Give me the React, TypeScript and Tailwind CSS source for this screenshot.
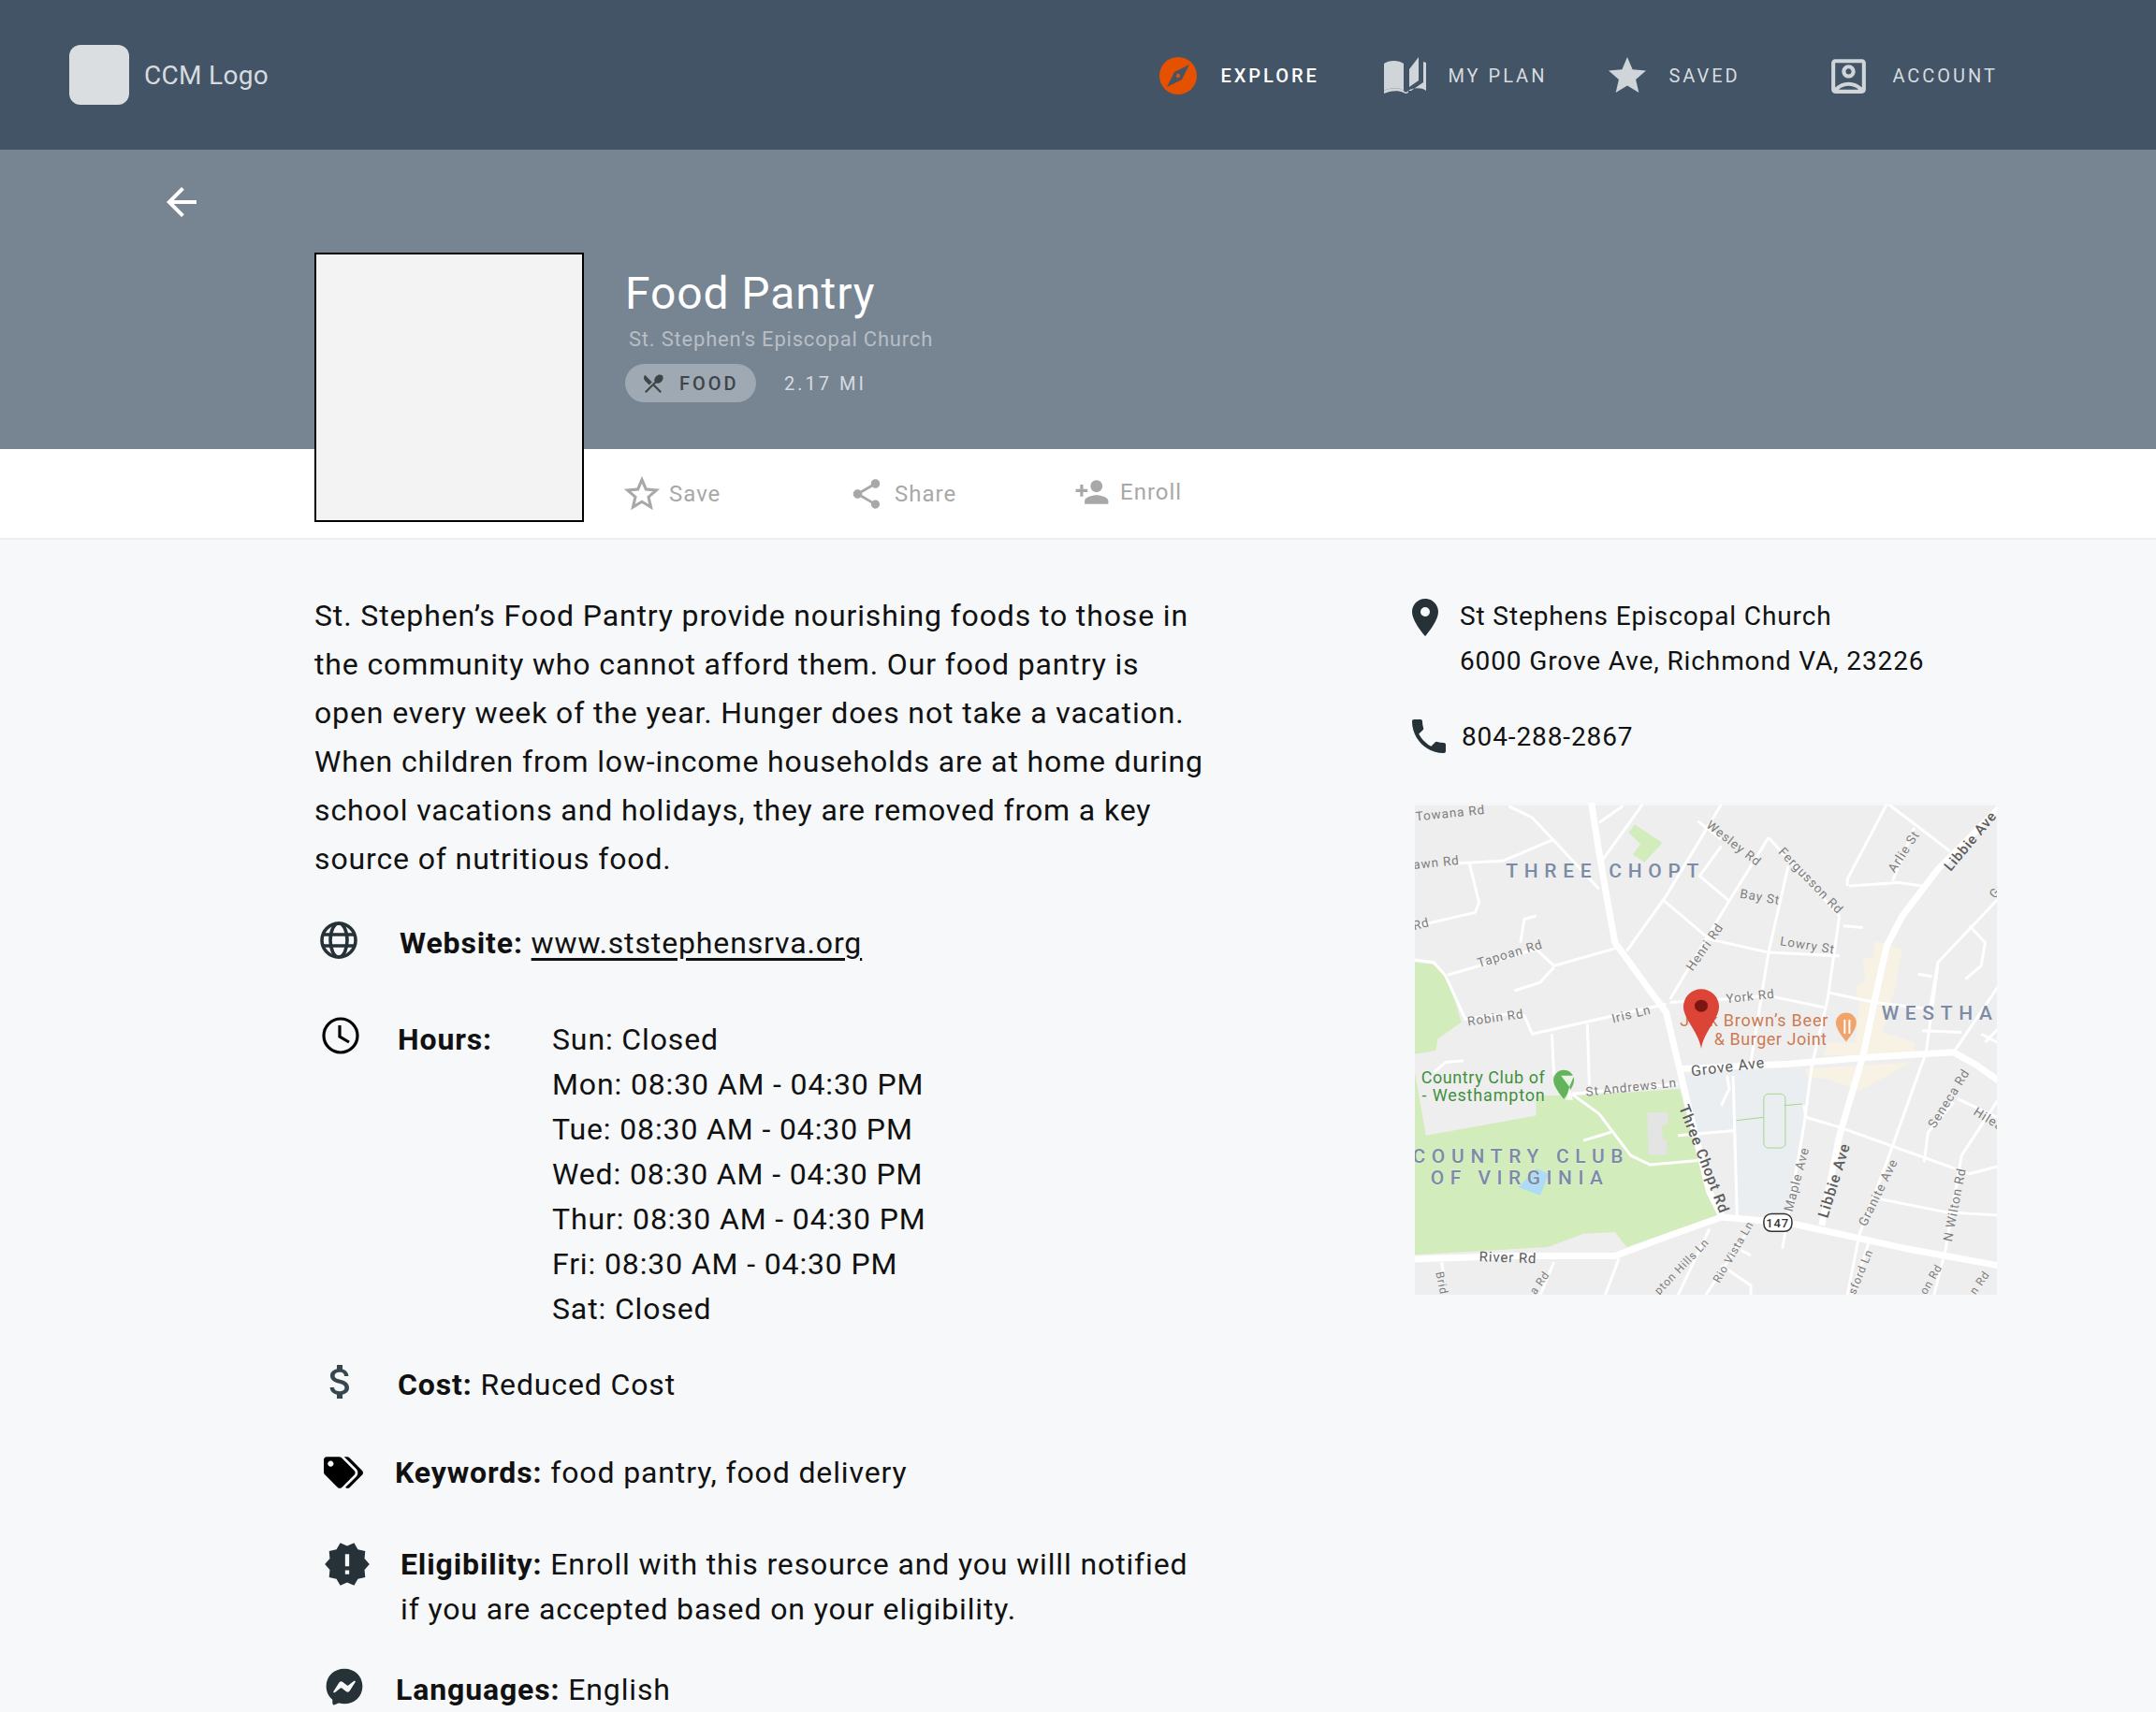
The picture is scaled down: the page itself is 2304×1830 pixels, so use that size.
import { ReactNode } from 'react';
import {
  MdAttachMoney,
  MdLocationOn,
  MdNewReleases,
  MdOutlineAccountBox,
  MdPersonAdd,
  MdPhone,
  MdRestaurantMenu,
  MdShare,
  MdStar,
  MdStarBorder,
} from 'react-icons/md';
import { FaFacebookMessenger, FaTags } from 'react-icons/fa';

// map drawing: coordinates were read off a zoomed crop, so convert them here
const mx = (x: number) => (x - 52) / 2.376;
const my = (y: number) => (y - 50) / 2.8;
const pts = (list: number[]) => {
  const out: string[] = [];
  for (let i = 0; i < list.length; i += 2) out.push(`${mx(list[i])},${my(list[i + 1])}`);
  return out.join(' ');
};

const bigRoads = [
  [500, 50, 520, 200, 540, 340, 560, 470, 640, 600, 690, 680, 720, 830, 750, 980, 800, 1220, 830, 1290],
  [40, 1422, 300, 1412, 560, 1412, 700, 1350, 830, 1295, 1000, 1312, 1300, 1390, 1540, 1442],
  [720, 850, 1000, 835, 1200, 815, 1420, 800, 1480, 840, 1540, 890],
  [1540, 60, 1380, 250, 1290, 390, 1250, 480, 1220, 640, 1190, 810, 1130, 1050, 1085, 1320],
];

const smallRoads = [
  [290, 60, 350, 95, 410, 170, 520, 310],
  [160, 232, 275, 225, 405, 160],
  [190, 230, 215, 350, 205, 380, 40, 425],
  [520, 110, 580, 60],
  [530, 220, 630, 55],
  [590, 495, 690, 330, 830, 55],
  [830, 180, 775, 270, 850, 345],
  [770, 105, 830, 160],
  [950, 155, 850, 345, 700, 640],
  [950, 155, 1130, 390],
  [1000, 240, 950, 500, 905, 830],
  [680, 340, 800, 460, 950, 500, 1130, 510],
  [1130, 390, 1100, 640, 1060, 840, 1040, 1020, 985, 1390],
  [1150, 300, 1150, 280, 1250, 55],
  [1155, 300, 1280, 290, 1340, 300],
  [1255, 55, 1410, 195],
  [1320, 125, 1265, 285],
  [1100, 620, 1220, 650, 1360, 670],
  [700, 650, 840, 640, 950, 630, 1090, 665],
  [690, 655, 350, 745, 330, 690, 290, 685, 180, 700, 130, 570, 100, 530, 40, 520],
  [135, 568, 215, 540, 360, 490, 405, 540, 560, 488],
  [405, 545, 370, 590, 305, 615],
  [320, 470, 330, 400, 360, 390],
  [400, 745, 405, 870],
  [490, 715, 495, 900],
  [450, 925, 720, 895],
  [450, 925, 520, 985, 600, 1110, 650, 1138, 770, 1125],
  [100, 860, 130, 830, 175, 825],
  [550, 1040, 480, 1065],
  [720, 1050, 865, 1035],
  [860, 870, 870, 1290],
  [845, 870, 850, 910, 830, 960],
  [1040, 960, 1045, 995, 1130, 1025, 1460, 1165, 1540, 1140],
  [1380, 540, 1350, 800, 1250, 1130, 1180, 1350, 1150, 1530],
  [1540, 330, 1380, 530, 1360, 670],
  [1420, 800, 1540, 590],
  [1430, 940, 1540, 1000],
  [1440, 1110, 1540, 930],
  [1440, 1110, 1400, 1390, 1370, 1530],
  [1230, 1240, 1400, 1280, 1540, 1290],
  [1345, 1130, 1355, 1040, 1420, 950],
  [1140, 420, 1190, 425],
  [1460, 420, 1500, 470, 1490, 540, 1450, 580],
  [1330, 565, 1365, 572],
  [800, 1330, 720, 1530],
  [890, 1350, 790, 1530],
  [880, 1395, 905, 1410],
  [830, 1440, 905, 1500, 905, 1530],
  [570, 1420, 535, 1530],
  [405, 1430, 370, 1530],
  [120, 1430, 125, 1470],
  [1205, 1370, 1160, 1530],
  [1340, 735, 1440, 740],
  [1540, 720, 1500, 770],
  [1530, 770, 1490, 745],
];

type Label = { t: string; x: number; y: number; r?: number; s?: number; c?: string; w?: number; b?: number };

const gray = '#7d7d7d';
const dark = '#5c5c5c';
const area = '#7c8ba6';

const labels: Label[] = [
  { t: 'Towana Rd', x: 55, y: 105, r: -6 },
  { t: 'Lawn Rd', x: 30, y: 252, r: -6 },
  { t: 'Rd', x: 50, y: 433, r: -14 },
  { t: 'Tapoan Rd', x: 215, y: 545, r: -17 },
  { t: 'Robin Rd', x: 187, y: 720, r: -8 },
  { t: 'Iris Ln', x: 555, y: 712, r: -14 },
  { t: 'York Rd', x: 843, y: 652, r: -6 },
  { t: 'Henri Rd', x: 757, y: 558, r: -55 },
  { t: 'Wesley Rd', x: 790, y: 122, r: 38 },
  { t: 'Fergusson Rd', x: 973, y: 200, r: 46 },
  { t: 'Bay St', x: 876, y: 335, r: 10 },
  { t: 'Lowry St', x: 978, y: 478, r: 9 },
  { t: 'Arlie St', x: 1270, y: 262, r: -57 },
  { t: 'Libbie Ave', x: 1412, y: 258, r: -50, s: 15, c: dark, b: 500 },
  { t: 'Gr', x: 1525, y: 340, r: -50 },
  { t: 'Seneca Rd', x: 1372, y: 1030, r: -58 },
  { t: 'Hilea', x: 1468, y: 985, r: 32 },
  { t: 'Maple Ave', x: 1010, y: 1280, r: -75 },
  { t: 'Libbie Ave', x: 1100, y: 1300, r: -73, s: 16, c: dark, b: 500 },
  { t: 'Granite Ave', x: 1197, y: 1325, r: -64 },
  { t: 'N Wilton Rd', x: 1415, y: 1370, r: -79 },
  { t: 'Three Chopt Rd', x: 722, y: 965, r: 69, s: 16, c: dark, b: 500 },
  { t: 'Grove Ave', x: 755, y: 872, r: -7, s: 16, c: dark },
  { t: 'St Andrews Ln', x: 487, y: 932, r: -6 },
  { t: 'River Rd', x: 215, y: 1428, r: 2, s: 15, c: dark },
  { t: 'Rio Vista Ln', x: 825, y: 1495, r: -60, s: 12 },
  { t: 'pton Hills Ln', x: 672, y: 1530, r: -46, s: 12 },
  { t: 'a Rd', x: 358, y: 1530, r: -55, s: 12 },
  { t: 'Brid', x: 105, y: 1462, r: 78, s: 12 },
  { t: 'sford Ln', x: 1170, y: 1530, r: -68, s: 12 },
  { t: 'on Rd', x: 1350, y: 1530, r: -60, s: 12 },
  { t: 'n Rd', x: 1475, y: 1530, r: -55, s: 12 },
  { t: 'THREE CHOPT', x: 283, y: 275, s: 21, c: area, w: 207, b: 500 },
  { t: 'WESTHA', x: 1237, y: 703, s: 21, c: area, w: 119, b: 500 },
  { t: 'COUNTRY CLUB', x: 46, y: 1133, s: 21, c: area, w: 226, b: 500 },
  { t: 'OF VIRGINIA', x: 92, y: 1197, s: 21, c: area, w: 185, b: 500 },
  { t: 'Jack Brown\u2019s Beer', x: 725, y: 723, s: 18, c: '#cc7a52', w: 159 },
  { t: '& Burger Joint', x: 812, y: 778, s: 18, c: '#cc7a52', w: 121 },
  { t: 'Country Club of', x: 68, y: 893, s: 18, c: '#3f8f3f', w: 133 },
  { t: '- Westhampton', x: 70, y: 948, s: 18, c: '#3f8f3f', w: 132 },
];

function MapPicture() {
  return (
    <svg viewBox="0 0 622 528" width={622} height={526} preserveAspectRatio="none" className="block">
      <rect width={622} height={528} fill="#eeeeee" />
      <rect width={622} height={3} fill="#f6f6f6" />
      <polygon
        fill="#d2ecbc"
        points={pts([52, 530, 95, 535, 135, 570, 170, 710, 110, 760, 105, 795, 52, 805])}
      />
      <polygon
        fill="#d2ecbc"
        points={pts([
          52, 860, 80, 1050, 360, 990, 360, 930, 470, 930, 540, 1010, 600, 1110, 650, 1140, 770, 915, 730, 900, 770, 1125,
          820, 1290, 700, 1340, 590, 1385, 560, 1340, 480, 1345, 390, 1385, 52, 1408,
        ])}
      />
      <polygon fill="#d2ecbc" points={pts([470, 930, 725, 910, 770, 1125, 650, 1140, 600, 1110])} />
      <polygon fill="#e4e4e4" points={pts([642, 980, 695, 980, 695, 1015, 680, 1020, 680, 1060, 692, 1065, 692, 1108, 645, 1108])} />
      <polygon fill="#d2ecbc" points={pts([610, 115, 680, 170, 635, 230, 605, 205, 625, 175, 595, 140])} />
      <polygon fill="#aedbf5" points={pts([315, 1205, 360, 1150, 392, 1165, 370, 1230])} />
      <polygon
        fill="#ebeef1"
        points={pts([850, 855, 1060, 845, 1040, 1020, 1000, 1280, 870, 1285, 860, 1030, 770, 1040, 735, 870])}
      />
      <polygon
        fill="#f8f2e4"
        points={pts([
          1220, 465, 1290, 490, 1270, 610, 1240, 740, 1320, 770, 1320, 800, 1090, 810, 1100, 770, 1170, 770, 1180, 650, 1170,
          600, 1195, 590, 1190, 520, 1215, 515,
        ])}
      />
      <polygon fill="#f8f2e4" points={pts([1040, 850, 1310, 830, 1230, 885, 1180, 915, 1100, 880, 1050, 875])} />
      {smallRoads.map((r, i) => (
        <polyline key={i} points={pts(r)} fill="none" stroke="#ffffff" strokeWidth={3} strokeLinejoin="round" />
      ))}
      {bigRoads.map((r, i) => (
        <polyline key={i} points={pts(r)} fill="none" stroke="#ffffff" strokeWidth={7} strokeLinejoin="round" />
      ))}
      <polyline points={pts([868, 1005, 938, 995])} fill="none" stroke="#a5d48f" strokeWidth={1} />
      <polyline points={pts([990, 960, 1035, 955])} fill="none" stroke="#a5d48f" strokeWidth={1} />
      <rect x={mx(938)} y={my(925)} width={23} height={58} rx={5} fill="none" stroke="#a5d48f" strokeWidth={1} />
      {labels.map((l) => (
        <text
          key={l.t + l.x}
          x={mx(l.x)}
          y={my(l.y)}
          transform={l.r ? `rotate(${l.r} ${mx(l.x)} ${my(l.y)})` : undefined}
          fontFamily="Roboto, sans-serif"
          fontSize={l.s ?? 13.5}
          fontWeight={l.b ?? 400}
          fill={l.c ?? gray}
          stroke="#f4f4f4"
          strokeOpacity={0.6}
          strokeWidth={1}
          paintOrder="stroke"
          textLength={l.w}
          lengthAdjust={l.w ? 'spacing' : undefined}
        >
          {l.t}
        </text>
      ))}
      {/* highway shield */}
      <rect x={mx(938)} y={my(1285)} width={30} height={19} rx={8} fill="#ffffff" stroke="#333333" strokeWidth={1.5} />
      <text x={mx(973)} y={my(1326)} textAnchor="middle" fontFamily="Roboto, sans-serif" fontSize={13} fontWeight={500} fill="#333333">
        147
      </text>
      {/* restaurant poi */}
      <path d={`M${mx(1147)} ${my(768)} q-11 -13 -11 -20 a11 11 0 1 1 22 0 q0 7 -11 20z`} fill="#f0a36b" />
      <rect x={mx(1141)} y={my(702)} width={2} height={15} fill="#ffffff" />
      <rect x={mx(1153)} y={my(702)} width={2} height={15} fill="#ffffff" />
      {/* golf poi */}
      <path d={`M${mx(430)} ${my(940)} q-11 -13 -11 -20 a11 11 0 1 1 22 0 q0 7 -11 20z`} fill="#63b35a" />
      <path d={`M${mx(423)} ${my(870)} h14 l-5 12 l4 14 h-8 l4 -14 z`} fill="#ffffff" opacity={0.85} />
      {/* selected marker */}
      <path d="M306 264 C303 245 287 232 287 219 a19 19 0 1 1 38 0 C325 232 309 245 306 264z" fill="#db4437" />
      <ellipse cx={306} cy={218} rx={7} ry={6.5} fill="#7b1611" />
    </svg>
  );
}

function Compass() {
  return (
    <svg viewBox="0 0 40 40" width={40} height={40} className="shrink-0">
      <circle cx={20} cy={20} r={20} fill="#e65100" />
      <path d="M32 8 L24 24 L8 32 L16 16 Z" fill="#425466" />
      <circle cx={20} cy={20} r={2.2} fill="#e65100" />
    </svg>
  );
}

function Book() {
  return (
    <svg viewBox="0 0 45 40" width={45} height={40} className="shrink-0">
      <path
        d="M0 7 C5 3 16 3 21 7 V36 C16 32 6 33 0 36 Z M26 36 C30 33 40 32 45 36 V6 L42 5 V27 L29 36 Z M27 13 L37 0 V25 L27 32 Z"
        fill="#d0d5d9"
      />
      <path d="M21 36 Q23.5 39 26 36 L26 38 Q23.5 40 21 38Z M0 36 C6 33 16 32 21 36 V38 C15 35 6 36 0 39Z" fill="#d0d5d9" />
    </svg>
  );
}

function Globe() {
  return (
    <svg viewBox="0 0 40 40" width={40} height={40} fill="none" stroke="#263238" strokeWidth={3.6} className="shrink-0">
      <circle cx={20} cy={20} r={18} />
      <ellipse cx={20} cy={20} rx={9} ry={18} />
      <path d="M2 14 H38 M2 26 H38" />
    </svg>
  );
}

function Clock() {
  return (
    <svg viewBox="0 0 40 40" width={40} height={40} fill="none" stroke="#000000" strokeWidth={3.2} className="shrink-0">
      <circle cx={20} cy={20} r={18} />
      <path d="M19 9 V21 L29 27" />
    </svg>
  );
}

function NavItem({ icon, label, active, className }: { icon: ReactNode; label: string; active?: boolean; className: string }) {
  return (
    <div className={`flex items-center ${className}`}>
      <div className="flex h-10 items-center justify-center">{icon}</div>
      <span className={`text-[20px] tracking-[3px] ${active ? 'font-medium text-white' : 'text-[#d7dbdf]'}`}>{label}</span>
    </div>
  );
}

function Action({ icon, label, className }: { icon: ReactNode; label: string; className: string }) {
  return (
    <div className={`flex items-center text-[#a8a8a8] ${className}`}>
      {icon}
      <span className="text-[24px] tracking-[1px]">{label}</span>
    </div>
  );
}

function Row({ icon, children, className }: { icon: ReactNode; children: ReactNode; className: string }) {
  return (
    <div className={`flex items-start ${className}`}>
      {icon}
      {children}
    </div>
  );
}

const hours = [
  'Sun: Closed',
  'Mon: 08:30 AM - 04:30 PM',
  'Tue: 08:30 AM - 04:30 PM',
  'Wed: 08:30 AM - 04:30 PM',
  'Thur: 08:30 AM - 04:30 PM',
  'Fri: 08:30 AM - 04:30 PM',
  'Sat: Closed',
];

export default function App() {
  return (
    <div className="h-[1830px] overflow-hidden bg-[#f6f8fa] font-['Roboto',sans-serif] text-[#111111]">
      <header className="flex h-[160px] items-center bg-[#425466] pl-[74px]">
        <div className="h-16 w-16 rounded-xl bg-[#dadee1]" />
        <span className="ml-4 pt-[2px] text-[28px] tracking-[0.3px] text-[#d7dbdf]">CCM Logo</span>
        <nav className="ml-auto mr-[169px] flex items-center pt-[2px]">
          <NavItem icon={<Compass />} label="EXPLORE" active className="w-[240px] gap-[25px]" />
          <NavItem icon={<Book />} label="MY PLAN" className="w-[236px] gap-[23px]" />
          <NavItem icon={<MdStar size={48} color="#d0d5d9" />} label="SAVED" className="w-[236px] gap-[20px]" />
          <NavItem icon={<MdOutlineAccountBox size={49} color="#d0d5d9" />} label="ACCOUNT" className="gap-[22px]" />
        </nav>
      </header>

      <section className="relative h-[320px] bg-[#778592]">
        <svg viewBox="0 0 24 24" width={48} height={48} fill="#ffffff" className="absolute left-[170px] top-[32px]">
          <path d="M20 11H7.83l5.59-5.59L12 4l-8 8 8 8 1.41-1.41L7.83 13H20v-2z" />
        </svg>
        <div className="absolute left-[668px] top-[118px]">
          <h1 className="text-[48px] leading-[72px] tracking-[0.9px] text-white">Food Pantry</h1>
          <p className="ml-[4px] -mt-[2px] text-[22px] leading-[30px] tracking-[0.8px] text-[#b7bec6]">St. Stephen’s Episcopal Church</p>
          <div className="mt-[11px] flex items-center">
            <div className="flex h-[41px] w-[140px] items-center rounded-full bg-[#9ea9b3] pl-[17px]">
              <MdRestaurantMenu size={26} color="#3f4448" />
              <span className="ml-[15px] text-[20px] font-medium tracking-[3px] text-[#3f4448]">FOOD</span>
            </div>
            <span className="ml-[30px] text-[20px] tracking-[3px] text-[#d7dbdf]">2.17 MI</span>
          </div>
        </div>
      </section>

      <section className="relative flex h-[97px] items-center border-b-2 border-[#eceef0] bg-white pl-[663px] pt-[1px]">
        <div className="absolute left-[336px] top-[-210px] h-[288px] w-[288px] border-2 border-black bg-[#f3f3f3]" />
        <Action icon={<MdStarBorder size={46} />} label="Save" className="w-[244px] gap-[6px]" />
        <Action icon={<MdShare size={38} />} label="Share" className="w-[241px] gap-[11px]" />
        <Action icon={<MdPersonAdd size={38} />} label="Enroll" className="-translate-y-[2px] gap-[11px]" />
      </section>

      <main className="flex pl-[336px] pt-[55px]">
        <div className="w-[970px] text-[32px] leading-[48px] tracking-[0.87px]">
          <p className="leading-[52px]">
            St. Stephen’s Food Pantry provide nourishing foods to those in
            <br />
            the community who cannot afford them. Our food pantry is
            <br />
            open every week of the year. Hunger does not take a vacation.
            <br />
            When children from low-income households are at home during
            <br />
            school vacations and holidays, they are removed from a key
            <br />
            source of nutritious food.
          </p>

          <Row icon={<div className="ml-[6px] mr-[45px] pt-[1px]"><Globe /></div>} className="mt-[40px]">
            <span>
              <b className="font-bold">Website:</b> <span className="underline underline-offset-[5px]">www.ststephensrva.org</span>
            </span>
          </Row>

          <Row icon={<div className="ml-[8px] mr-[41px]"><Clock /></div>} className="mt-[55px]">
            <b className="w-[165px] font-bold">Hours:</b>
            <div>
              {hours.map((h) => (
                <div key={h}>{h}</div>
              ))}
            </div>
          </Row>

          <Row icon={<div className="mr-[28px] flex w-[61px] justify-start"><MdAttachMoney size={48} color="#37474f" className="-mt-[3px] ml-[4px]" /></div>} className="mt-[33px]">
            <span>
              <b className="font-bold">Cost:</b> Reduced Cost
            </span>
          </Row>

          <Row icon={<div className="ml-[10px] mr-[34px] pt-[3px]"><FaTags size={42} color="#000000" /></div>} className="mt-[46px]">
            <span>
              <b className="font-bold">Keywords:</b> food pantry, food delivery
            </span>
          </Row>

          <Row icon={<div className="-mt-[2px] ml-[9px] mr-[31px]"><MdNewReleases size={52} color="#263238" /></div>} className="mt-[50px]">
            <span>
              <b className="font-bold">Eligibility:</b> Enroll with this resource and you willl notified
              <br />
              if you are accepted based on your eligibility.
            </span>
          </Row>

          <Row icon={<div className="ml-[12px] mr-[35px] pt-[1px]"><FaFacebookMessenger size={40} color="#263238" /></div>} className="mt-[38px]">
            <span>
              <b className="font-bold">Languages:</b> English
            </span>
          </Row>
        </div>

        <aside className="ml-[202px] mt-[3px] w-[626px] text-[28px] leading-[48px] tracking-[0.88px]">
          <div className="flex items-start">
            <MdLocationOn size={48} color="#263238" className="-ml-[9px] mt-[1px] mr-[13px]" />
            <div>
              <div>St Stephens Episcopal Church</div>
              <div>6000 Grove Ave, Richmond VA, 23226</div>
            </div>
          </div>
          <div className="mt-[33px] flex items-start">
            <MdPhone size={48} color="#263238" className="-mt-[1px] -ml-[5px] mr-[11px]" />
            <span>804-288-2867</span>
          </div>
          <div className="ml-[4px] mt-[46px]">
            <MapPicture />
          </div>
        </aside>
      </main>
    </div>
  );
}
